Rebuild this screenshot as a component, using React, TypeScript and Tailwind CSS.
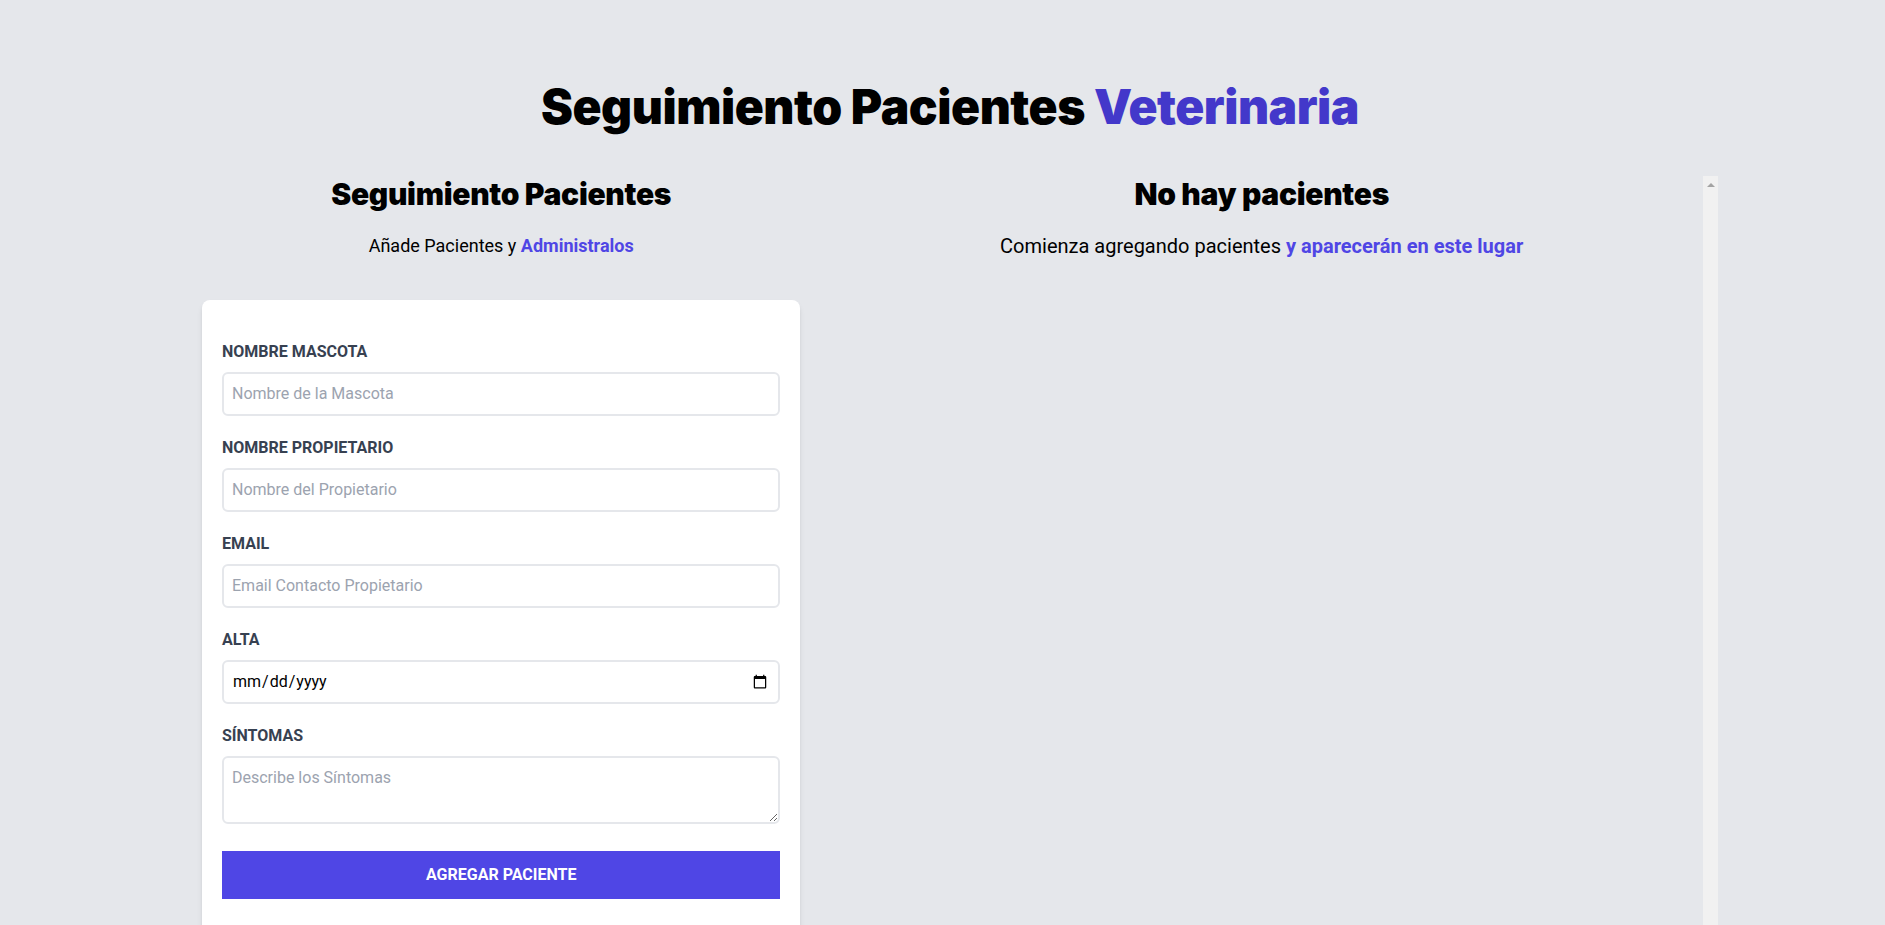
import { useState } from 'react';

function Formulario() {
  const [nombre, setNombre] = useState('');
  const [propietario, setPropietario] = useState('');
  const [email, setEmail] = useState('');
  const [fecha, setFecha] = useState('');
  const [sintomas, setSintomas] = useState('');

  const inputClass =
    'border-2 border-[#e5e7eb] w-full p-2 mt-2 placeholder-[#9ca3af] rounded-md outline-none text-base';

  return (
    <div className="w-2/5 mx-5">
      <h2 className="font-black text-3xl text-center font-['Inter',sans-serif] tracking-[-0.01em]">
        Seguimiento Pacientes
      </h2>
      <p className="text-lg mt-5 text-center mb-10">
        Añade Pacientes y <span className="text-[#4f46e5] font-bold">Administralos</span>
      </p>

      <form className="bg-white shadow-md rounded-lg py-10 px-5 mb-10" onSubmit={(e) => e.preventDefault()}>
        <div className="mb-5">
          <label htmlFor="mascota" className="block text-[#374151] uppercase font-bold">
            Nombre Mascota
          </label>
          <input
            id="mascota"
            type="text"
            placeholder="Nombre de la Mascota"
            className={inputClass}
            value={nombre}
            onChange={(e) => setNombre(e.target.value)}
          />
        </div>

        <div className="mb-5">
          <label htmlFor="propietario" className="block text-[#374151] uppercase font-bold">
            Nombre Propietario
          </label>
          <input
            id="propietario"
            type="text"
            placeholder="Nombre del Propietario"
            className={inputClass}
            value={propietario}
            onChange={(e) => setPropietario(e.target.value)}
          />
        </div>

        <div className="mb-5">
          <label htmlFor="email" className="block text-[#374151] uppercase font-bold">
            Email
          </label>
          <input
            id="email"
            type="email"
            placeholder="Email Contacto Propietario"
            className={inputClass}
            value={email}
            onChange={(e) => setEmail(e.target.value)}
          />
        </div>

        <div className="mb-5">
          <label htmlFor="alta" className="block text-[#374151] uppercase font-bold">
            Alta
          </label>
          <input
            id="alta"
            type="date"
            className={inputClass}
            value={fecha}
            onChange={(e) => setFecha(e.target.value)}
          />
        </div>

        <div className="mb-5">
          <label htmlFor="sintomas" className="block text-[#374151] uppercase font-bold">
            Síntomas
          </label>
          <textarea
            id="sintomas"
            rows={2}
            placeholder="Describe los Síntomas"
            className={inputClass}
            value={sintomas}
            onChange={(e) => setSintomas(e.target.value)}
          />
        </div>

        <input
          type="submit"
          value="Agregar Paciente"
          className="bg-[#4f46e5] w-full p-3 text-white uppercase font-bold hover:bg-[#4338ca] cursor-pointer transition-colors"
        />
      </form>
    </div>
  );
}

function ListadoPacientes() {
  return (
    <div className="w-3/5 h-screen flex">
      <div className="flex-1 overflow-y-auto">
        <h2 className="font-black text-3xl text-center font-['Inter',sans-serif] tracking-[-0.01em]">
          No hay pacientes
        </h2>
        <p className="text-xl mt-5 mb-10 text-center">
          Comienza agregando pacientes{' '}
          <span className="text-[#4f46e5] font-bold">y aparecerán en este lugar</span>
        </p>
      </div>
      {/* scrollbar track as it shows in the capture */}
      <div className="w-[15px] bg-[#f1f1f1] flex justify-center pt-[7px]">
        <div className="w-0 h-0 border-l-[4px] border-r-[4px] border-b-[4px] border-l-transparent border-r-transparent border-b-[#a3a3a3]" />
      </div>
    </div>
  );
}

export default function App() {
  return (
    <div className="min-h-screen bg-[#e5e7eb] pl-[15px] font-['Roboto',sans-serif]">
      <div className="mx-auto max-w-[1536px] pt-20">
        <h1 className="font-black text-5xl text-center w-2/3 mx-auto pt-[3px] font-['Inter',sans-serif] tracking-[-0.01em]">
          Seguimiento Pacientes <span className="text-[#4338ca]">Veterinaria</span>
        </h1>

        <div className="mt-[45px] flex">
          <Formulario />
          <ListadoPacientes />
        </div>
      </div>
    </div>
  );
}
